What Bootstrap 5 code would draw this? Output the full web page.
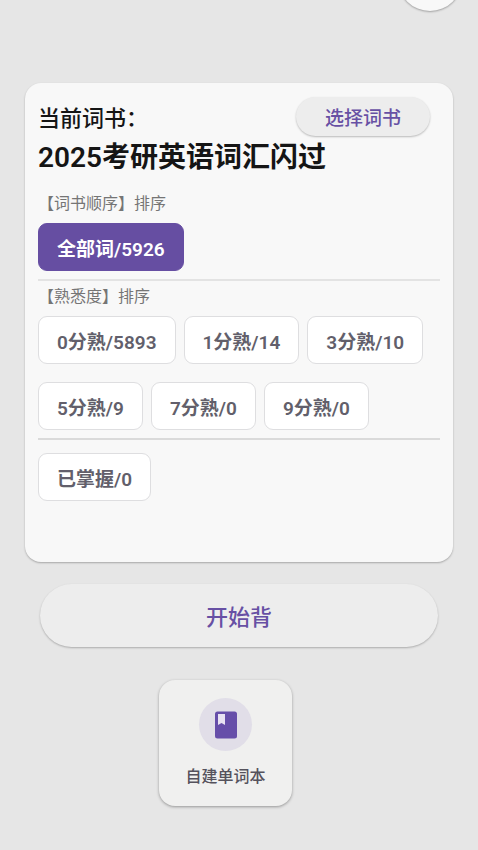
<!DOCTYPE html>
<html lang="zh-CN">
<head>
<meta charset="utf-8">
<meta name="viewport" content="width=device-width, initial-scale=1">
<title>当前词书</title>
<link href="https://cdn.jsdelivr.net/npm/bootstrap@5.3.0/dist/css/bootstrap.min.css" rel="stylesheet">
<style>
body { background: #e6e6e6; font-family: Roboto, "Noto Sans CJK SC", sans-serif; color: #151515; overflow-x: hidden; }
.page-top { height: 83px; }
.round-btn { position: absolute; top: -53px; right: 16px; width: 64px; height: 64px; background: #f8f8f8; box-shadow: 0 1px 2px rgba(0,0,0,.3); }
.book-panel { background: #f8f8f8; border-radius: 16px; margin: 0 25px; padding: 14px 13px 61px; box-shadow: 0 1px 2px rgba(0,0,0,.28); }
.label-text { font-size: 22px; line-height: 28px; font-weight: 500; padding-top: 4px; }
.book-name { font-size: 28px; line-height: 44px; font-weight: 600; margin-bottom: 12px; }
.sort-text { font-size: 16px; line-height: 24px; color: #757575; margin-bottom: 7px; }
.btn-tonal { --bs-btn-color: #6750a4; --bs-btn-bg: #ededed; --bs-btn-hover-color: #6750a4; --bs-btn-hover-bg: #e6e3ea; --bs-btn-border-width: 0; box-shadow: 0 1px 2px rgba(0,0,0,.25); font-weight: 500; }
.pick-btn { font-size: 19px; line-height: 28px; padding: 8px 29px 3px; margin-right: 10px; }
.chip-btn { --bs-btn-color: #625f6b; --bs-btn-bg: #fff; --bs-btn-border-color: #dedee0; --bs-btn-hover-color: #49454f; --bs-btn-hover-bg: #f3f1f6; --bs-btn-hover-border-color: #dedee0; font-size: 19px; line-height: 28px; font-weight: 600; padding: 12px 18px 6px; border-radius: 9px; }
.chip-btn.chip-on { --bs-btn-color: #fff; --bs-btn-bg: #664ea2; --bs-btn-border-color: #664ea2; --bs-btn-hover-color: #fff; --bs-btn-hover-bg: #594391; }
.chip-list { gap: 18px 8px; }
.rule { border-top: 2px solid #e3e3e3; opacity: 1; margin: 8px 0 4px; }
.rule-last { border-color: #dadada; margin-bottom: 13px; }
.start-btn { font-size: 22px; line-height: 32px; padding: 18px 16px 13px; }
.start-wrap { margin: 22px 40px 33px; }
.tile-row { padding-right: 27px; }
.tile-btn { --bs-btn-color: #55525c; --bs-btn-bg: #f0f0ef; --bs-btn-hover-bg: #eae8ee; --bs-btn-border-width: 0; font-size: 16px; line-height: 24px; font-weight: 500; width: 133px; padding: 18px 8px 17px; border-radius: 16px; box-shadow: 0 1px 3px rgba(0,0,0,.35); }
.tile-icon { width: 53px; height: 53px; background: #e1dee8; margin-bottom: 14px; }
</style>
</head>
<body>
<header class="page-top position-relative">
  <button type="button" class="btn round-btn rounded-circle border-0 p-0" aria-label="菜单"></button>
</header>
<main>
  <section class="book-panel">
    <div class="d-flex justify-content-between align-items-center">
      <span class="label-text">当前词书：</span>
      <button type="button" class="btn btn-tonal pick-btn rounded-pill">选择词书</button>
    </div>
    <h1 class="book-name">2025考研英语词汇闪过</h1>
    <p class="sort-text">【词书顺序】排序</p>
    <div class="chip-list d-flex flex-wrap">
      <button type="button" class="btn chip-btn chip-on">全部词/5926</button>
    </div>
    <hr class="rule">
    <p class="sort-text">【熟悉度】排序</p>
    <div class="chip-list d-flex flex-wrap">
      <button type="button" class="btn chip-btn">0分熟/5893</button>
      <button type="button" class="btn chip-btn">1分熟/14</button>
      <button type="button" class="btn chip-btn">3分熟/10</button>
      <button type="button" class="btn chip-btn">5分熟/9</button>
      <button type="button" class="btn chip-btn">7分熟/0</button>
      <button type="button" class="btn chip-btn">9分熟/0</button>
    </div>
    <hr class="rule rule-last">
    <button type="button" class="btn chip-btn">已掌握/0</button>
  </section>
  <div class="start-wrap d-grid">
    <button type="button" class="btn btn-tonal start-btn rounded-pill">开始背</button>
  </div>
  <div class="tile-row d-flex justify-content-center pb-4">
    <button type="button" class="btn tile-btn d-flex flex-column align-items-center">
      <span class="tile-icon rounded-circle d-flex align-items-center justify-content-center">
        <svg width="22" height="28" viewBox="0 0 22 28" aria-hidden="true"><rect width="22" height="27" y=".5" rx="2.5" fill="#664ea9"/><path d="M3 3h7v11l-3.500-2L3 14z" fill="#e8e2f2"/></svg>
      </span>
      自建单词本
    </button>
  </div>
</main>
<script src="https://cdn.jsdelivr.net/npm/bootstrap@5.3.0/dist/js/bootstrap.bundle.min.js"></script>
</body>
</html>
